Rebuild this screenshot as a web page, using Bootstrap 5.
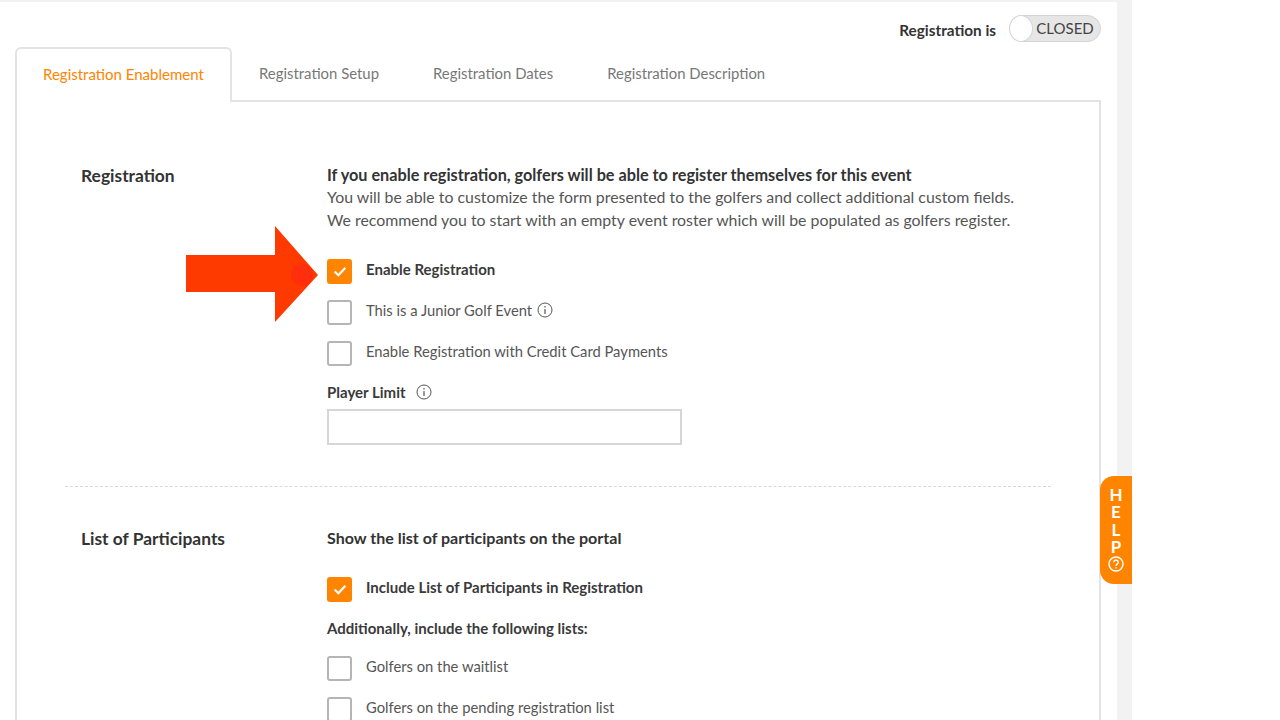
<!DOCTYPE html>
<html lang="en">
<head>
<meta charset="utf-8">
<title>Registration</title>
<link href="https://cdn.jsdelivr.net/npm/bootstrap@5.3.0/dist/css/bootstrap.min.css" rel="stylesheet">
<style>
html,body{height:720px;overflow:hidden;background:#fff}
body{font-family:"Lato","Liberation Sans",sans-serif;color:#333;font-size:15px}
.stage{position:relative;width:1132px;height:720px;background:#f2f2f2;padding:2px 15px 0 0;overflow:hidden}
.panel{background:#fff;height:718px;padding:0 16px 0 15px}
.topline{height:45px;padding-top:13px;gap:13px}
.reg-label{font-weight:700;font-size:15.3px;color:#333;padding-top:4px}
.toggle{width:92px;height:27px;border:1px solid #d4d4d4;border-radius:14px;background:#e6e6e6;font-size:15px;color:#444;padding-left:20px;line-height:24px;text-align:center}
.knob{position:absolute;left:-1px;top:-1px;width:24px;height:27px;border-radius:50%;background:#fff;border:1px solid #d4d4d4}
.tabs-x{border-bottom:2px solid #e3e3e3;height:55px;margin:0}
.tabs-x .nav-link{border:0;padding:15px 27px 0;color:#777;font-size:14.9px;height:55px;margin:0;border-radius:0;background:none}
.tabs-x .nav-link.active{color:#ff8400;font-size:15px;border:2px solid #e3e3e3;border-bottom:0;border-radius:6px 6px 0 0;background:#fff;height:55px;width:217px;padding:14px 0 0 26px;text-align:left;position:relative;z-index:1}
.pane{border:2px solid #e3e3e3;border-top:0;margin-top:-1px;padding:63px 48px 0;height:640px}
.side{width:262px;padding-left:16px;font-size:17.4px;font-weight:700;color:#333;flex:none;line-height:24px}
.body-x{width:730px}
.lead-x{font-weight:700;font-size:16.25px;line-height:22px}
.lead-y{font-size:16.05px}
.copy{font-size:15.86px;line-height:22.5px;color:#555}
.ck{width:25px;height:25px;border:2px solid #b5b5b5;border-radius:3px;background:#fff;flex:none;display:flex;align-items:center;justify-content:center;margin-right:14px}
.ck.on{background:#ff8400;border-color:#ff8400}
.opt{height:25px;font-size:14.75px;line-height:20px;color:#555;align-items:flex-start}
.opt.strong{font-size:15px;font-weight:700;color:#3a3a3a}
.inf{margin-left:5px;margin-top:2px}
.inf2{margin-left:10px}
.lbl{font-size:15px;font-weight:700;color:#3a3a3a;line-height:20px}
.num{width:355px;height:36px;border:2px solid #d6d6d6;background:#fff;margin-top:7px}
.rule{border-top:1px dashed #d8d8d8;margin:41px 0 40px}
.m15{margin-top:15px}.m16{margin-top:16px}.m18{margin-top:18px}.m28{margin-top:28px}
.arrow{position:absolute;left:186px;top:226px}
.helper{position:absolute;left:1100px;top:476px;width:32px;height:108px;background:#ff8400;border-radius:14px 0 0 14px;color:#fff;font-weight:700;font-size:17px;line-height:17.3px;text-align:center;padding-top:10px}
.helper svg{margin-top:1px}
</style>
</head>
<body>
<div class="stage">
  <div class="panel">
    <div class="topline d-flex justify-content-end align-items-start">
      <span class="reg-label">Registration is</span>
      <div class="toggle position-relative"><span class="knob"></span>CLOSED</div>
    </div>
    <ul class="nav tabs-x">
      <li class="nav-item"><a class="nav-link active" href="#">Registration Enablement</a></li>
      <li class="nav-item"><a class="nav-link" href="#">Registration Setup</a></li>
      <li class="nav-item"><a class="nav-link" href="#">Registration Dates</a></li>
      <li class="nav-item"><a class="nav-link" href="#">Registration Description</a></li>
    </ul>
    <div class="pane">
      <div class="d-flex">
        <div class="side">Registration</div>
        <div class="body-x">
          <div class="lead-x">If you enable registration, golfers will be able to register themselves for this event</div>
          <div class="copy">You will be able to customize the form presented to the golfers and collect additional custom fields.<br>We recommend you to start with an empty event roster which will be populated as golfers register.</div>
          <div class="d-flex opt strong m28"><span class="ck on"><svg width="14" height="11" viewBox="0 0 13 10"><path d="M1.5 5l3.5 3.5 6.5-7" fill="none" stroke="#fff" stroke-width="2"/></svg></span>Enable Registration</div>
          <div class="d-flex opt m16"><span class="ck"></span>This is a Junior Golf Event<svg class="inf" width="16" height="16" viewBox="0 0 16 16"><circle cx="8" cy="8" r="7" fill="none" stroke="#555" stroke-width="1"/><path d="M8 7v5M8 4v1.4" stroke="#555" stroke-width="1.2"/></svg></div>
          <div class="d-flex opt m16"><span class="ck"></span>Enable Registration with Credit Card Payments</div>
          <div class="lbl d-flex align-items-center m16">Player Limit<svg class="inf2" width="16" height="16" viewBox="0 0 16 16"><circle cx="8" cy="8" r="7" fill="none" stroke="#555" stroke-width="1"/><path d="M8 7v5M8 4v1.4" stroke="#555" stroke-width="1.2"/></svg></div>
          <div class="num"></div>
        </div>
      </div>
      <div class="rule"></div>
      <div class="d-flex">
        <div class="side">List of Participants</div>
        <div class="body-x">
          <div class="lead-x lead-y">Show the list of participants on the portal</div>
          <div class="d-flex opt strong m28"><span class="ck on"><svg width="14" height="11" viewBox="0 0 13 10"><path d="M1.5 5l3.5 3.5 6.5-7" fill="none" stroke="#fff" stroke-width="2"/></svg></span>Include List of Participants in Registration</div>
          <div class="lbl m16">Additionally, include the following lists:</div>
          <div class="d-flex opt m18"><span class="ck"></span>Golfers on the waitlist</div>
          <div class="d-flex opt m16"><span class="ck"></span>Golfers on the pending registration list</div>
        </div>
      </div>
    </div>
  </div>
  <svg class="arrow" width="133" height="97" viewBox="0 0 133 97"><path d="M0 29H89V0L132 49 89 96V66H0z" fill="#ff3a00"/><circle cx="116" cy="49" r="11" fill="#ff2e0c"/></svg>
  <div class="helper">H<br>E<br>L<br>P<svg class="d-block mx-auto" width="16" height="16" viewBox="0 0 16 16"><circle cx="8" cy="8" r="7" fill="none" stroke="#fff" stroke-width="1.4"/><path d="M5.8 6.3a2.2 2.2 0 1 1 3.4 1.8c-.8.5-1.2.9-1.2 1.8M8 11.2v1.4" fill="none" stroke="#fff" stroke-width="1.5"/></svg></div>
</div>
<script src="https://cdn.jsdelivr.net/npm/bootstrap@5.3.0/dist/js/bootstrap.bundle.min.js"></script>
</body>
</html>
